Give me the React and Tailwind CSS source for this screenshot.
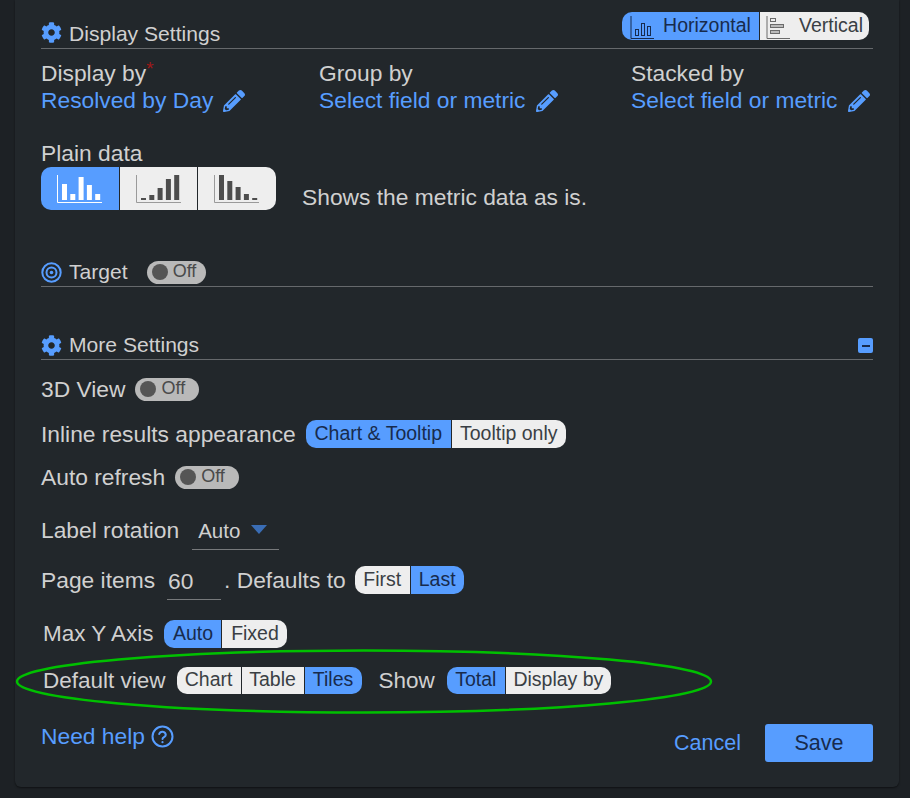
import React from "react";
import { FaCog, FaPencilAlt } from "react-icons/fa";

const Seg = ({ items, h = "h-[28px]", size = "text-[19.5px]" }) => (
  <div className={`flex ${h} ${size} rounded-[10px] overflow-hidden shrink-0 leading-none`}>
    {items.map((it, i) => (
      <div
        key={i}
        style={{ width: it.w }}
        className={`flex items-center justify-center ${i > 0 ? "ml-[1px]" : ""} ${it.on ? "bg-[#579dff] text-[#172b4d]" : "bg-[#eeeeee] text-[#3a3f44]"}`}
      >
        {it.icon}
        {it.t}
      </div>
    ))}
  </div>
);

const Toggle = ({ w = "w-[64px]" }) => (
  <div className={`${w} h-[23px] rounded-full bg-[#b9b9b9] flex items-center pl-[5px] gap-[5px] shrink-0`}>
    <span className="w-[16px] h-[16px] rounded-full bg-[#555555]" />
    <span className="text-[18px] leading-none text-[#4a4a4a] pb-[3px]">Off</span>
  </div>
);

const Bars = ({ heights, color, axis }) => (
  <svg width="46" height="30" viewBox="0 0 46 30" fill="none">
    <path d="M0.5 1V28.5H45" stroke={axis} strokeWidth="1" />
    {heights.map((h, i) => (
      <rect key={i} x={5 + i * 8.3} y={26 - h} width="5" height={h} fill={color} />
    ))}
  </svg>
);

const Field = ({ label, value, star, w }) => (
  <div style={{ width: w }} className="shrink-0">
    <div className="h-[27px] leading-[27px] text-[#d0d0d0]">
      {label}
      {star && <span className="text-[#a01818] text-[19px] leading-none relative -top-[6px]">*</span>}
    </div>
    <div className="h-[27px] leading-[27px] text-[#579dff] flex items-center gap-[10px]">
      {value}
      <FaPencilAlt className="w-[22px] h-[22px]" />
    </div>
  </div>
);

const Heading = ({ icon, children, right, className = "" }) => (
  <div className={`h-[28px] flex items-center border-b-[1.5px] border-[#66696c] box-content ${className}`}>
    {icon}
    <span className="ml-[7px] text-[#d0d0d0] text-[21.1px]">{children}</span>
    {right}
  </div>
);

const Row = ({ className = "", children }) => (
  <div className={`flex items-center text-[#d0d0d0] ${className}`}>{children}</div>
);

export default function App() {
  return (
    <div className="relative w-[910px] h-[798px] overflow-hidden bg-[#1d2125] font-['Liberation_Sans',Arial,sans-serif] text-[22.8px]">
      <div className="ml-[15px] w-[884px] h-[787px] bg-[#22272b] rounded-b-[6px] px-[26px] pt-[12px] shadow-[0_1px_2px_rgba(0,0,0,0.5)]">
        <div className="h-[37px] flex items-start border-b-[1.5px] border-[#66696c]">
          <div className="flex items-center h-[28px] pt-[15px]">
            <FaCog className="w-[21px] h-[21px] text-[#579dff] -mt-[2px]" />
            <span className="ml-[7px] text-[#d0d0d0] text-[21.1px]">Display Settings</span>
          </div>
          <div className="ml-auto mr-[4px]">
            <Seg
              items={[
                {
                  t: "Horizontal",
                  w: 137,
                  on: true,
                  icon: (
                    <svg width="25" height="26" viewBox="0 0 25 26" fill="none" className="mr-[8px] mt-[1px]" stroke="#172b4d">
                      <path d="M1 2V24.5H24" />
                      <rect x="5.5" y="15.5" width="3" height="6" />
                      <rect x="11.5" y="9.5" width="3" height="12" />
                      <rect x="17.5" y="12.5" width="3" height="9" />
                    </svg>
                  ),
                },
                {
                  t: "Vertical",
                  w: 109,
                  icon: (
                    <svg width="25" height="26" viewBox="0 0 25 26" fill="none" className="mr-[8px] mt-[1px]" stroke="#6b6b6b">
                      <path d="M1 2V24.5H24" />
                      <rect x="4.5" y="4.5" width="5" height="3" />
                      <rect x="4.5" y="10.5" width="13" height="3" fill="#bbbbbb" />
                      <rect x="4.5" y="16.5" width="9" height="3" fill="#bbbbbb" />
                    </svg>
                  ),
                },
              ]}
            />
          </div>
        </div>

        <div className="flex mt-[11px]">
          <Field label="Display by" star value="Resolved by Day" w={278} />
          <Field label="Group by" value="Select field or metric" w={312} />
          <Field label="Stacked by" value="Select field or metric" w={242} />
        </div>

        <div className="mt-[26px] h-[27px] leading-[27px] text-[#d0d0d0]">Plain data</div>
        <div className="flex items-end">
          <div className="flex h-[43px] w-[235px] rounded-[10px] overflow-hidden shrink-0">
            <div className="w-[78px] bg-[#579dff] flex items-center justify-center">
              <Bars heights={[16, 6, 23, 15, 6]} color="#ffffff" axis="#ffffff" />
            </div>
            <div className="w-[77px] ml-[1px] bg-[#eeeeee] flex items-center justify-center">
              <Bars heights={[2, 5, 12, 21, 25]} color="#4d4d4d" axis="#9a9a9a" />
            </div>
            <div className="w-[78px] ml-[1px] bg-[#eeeeee] flex items-center justify-center">
              <Bars heights={[25, 19, 13, 6, 2]} color="#4d4d4d" axis="#9a9a9a" />
            </div>
          </div>
          <span className="ml-[26px] text-[#d0d0d0] leading-[27px] mb-[-1px]">Shows the metric data as is.</span>
        </div>

        <Heading
          className="mt-[48px]"
          icon={
            <svg width="21" height="21" viewBox="0 0 21 21" fill="none" stroke="#579dff">
              <circle cx="10.5" cy="10.5" r="9.2" strokeWidth="2" />
              <circle cx="10.5" cy="10.5" r="5" strokeWidth="2" />
              <circle cx="10.5" cy="10.5" r="1.8" fill="#579dff" strokeWidth="0" />
            </svg>
          }
          right={<div className="ml-[19px]"><Toggle w="w-[59px]" /></div>}
        >
          Target
        </Heading>

        <Heading
          className="mt-[44px]"
          icon={<FaCog className="w-[21px] h-[21px] text-[#579dff]" />}
          right={
            <div className="ml-auto w-[15px] h-[15px] rounded-[2px] bg-[#579dff] flex items-center justify-center mt-[1px]">
              <span className="w-[8px] h-[2px] bg-[#172b4d]" />
            </div>
          }
        >
          More Settings
        </Heading>

        <Row className="h-[30px] mt-[14px] gap-[10px]">
          <span>3D View</span>
          <Toggle />
        </Row>
        <Row className="h-[30px] mt-[15px] gap-[10px]">
          <span>Inline results appearance</span>
          <Seg items={[{ t: "Chart & Tooltip", w: 145, on: true }, { t: "Tooltip only", w: 114 }]} />
        </Row>
        <Row className="h-[30px] mt-[13px] gap-[10px]">
          <span>Auto refresh</span>
          <Toggle />
        </Row>
        <Row className="h-[30px] mt-[23px]">
          <span>Label rotation</span>
          <div className="ml-[13px] w-[87px] h-[35px] mt-[4px] border-b-[1.5px] border-[#77797b] flex items-center pl-[6px] text-[20.5px] pb-[1px]">
            Auto
            <svg width="16" height="9" viewBox="0 0 16 9" className="ml-[11px] mb-[3px]"><path d="M0 0H16L8 9Z" fill="#3a6db5" /></svg>
          </div>
        </Row>
        <Row className="h-[30px] mt-[20px]">
          <span>Page items</span>
          <div className="ml-[12px] w-[54px] h-[36px] mt-[4px] border-b-[1.5px] border-[#77797b] flex items-center pl-[1px]">60</div>
          <span className="ml-[3px]">. Defaults to</span>
          <div className="ml-[9px]"><Seg items={[{ t: "First", w: 55 }, { t: "Last", w: 53, on: true }]} /></div>
        </Row>
        <Row className="h-[30px] mt-[24px] pl-[2px] text-[22.5px]">
          <span>Max Y Axis</span>
          <div className="ml-[11px]"><Seg items={[{ t: "Auto", w: 57, on: true }, { t: "Fixed", w: 65 }]} /></div>
        </Row>
        <Row className="h-[30px] mt-[17px] pl-[2px] text-[22.5px]">
          <span>Default view</span>
          <div className="ml-[11px] -mt-[2px]">
            <Seg h="h-[27px]" items={[{ t: "Chart", w: 64 }, { t: "Table", w: 62 }, { t: "Tiles", w: 57, on: true }]} />
          </div>
          <span className="ml-[17px]">Show</span>
          <div className="ml-[12px] -mt-[2px]">
            <Seg h="h-[27px]" items={[{ t: "Total", w: 58, on: true }, { t: "Display by", w: 105 }]} />
          </div>
        </Row>
        <div className="flex items-center mt-[28px] h-[38px] text-[#579dff] text-[21.5px]">
          <div className="flex items-center gap-[6px] -mt-[13px] text-[22.8px]">
            <span>Need help</span>
            <svg width="23" height="23" viewBox="0 0 23 23" fill="none" stroke="#579dff" strokeWidth="2">
              <circle cx="11.5" cy="11.5" r="10" />
              <path d="M8.2 9a3.4 3.4 0 0 1 6.6 .8c0 2.2 -3.3 2.4 -3.3 4.2" strokeLinecap="round" />
              <circle cx="11.5" cy="17.2" r="1.1" fill="#579dff" stroke="none" />
            </svg>
          </div>
          <span className="ml-auto">Cancel</span>
          <div className="ml-[24px] w-[108px] h-[38px] rounded-[3px] bg-[#579dff] text-[#172b4d] flex items-center justify-center">Save</div>
        </div>
      </div>

      <svg className="absolute left-0 top-0 pointer-events-none" width="910" height="798" fill="none">
        <ellipse cx="364" cy="681.5" rx="347" ry="31" stroke="#00c000" strokeWidth="2.5" />
      </svg>
    </div>
  );
}
